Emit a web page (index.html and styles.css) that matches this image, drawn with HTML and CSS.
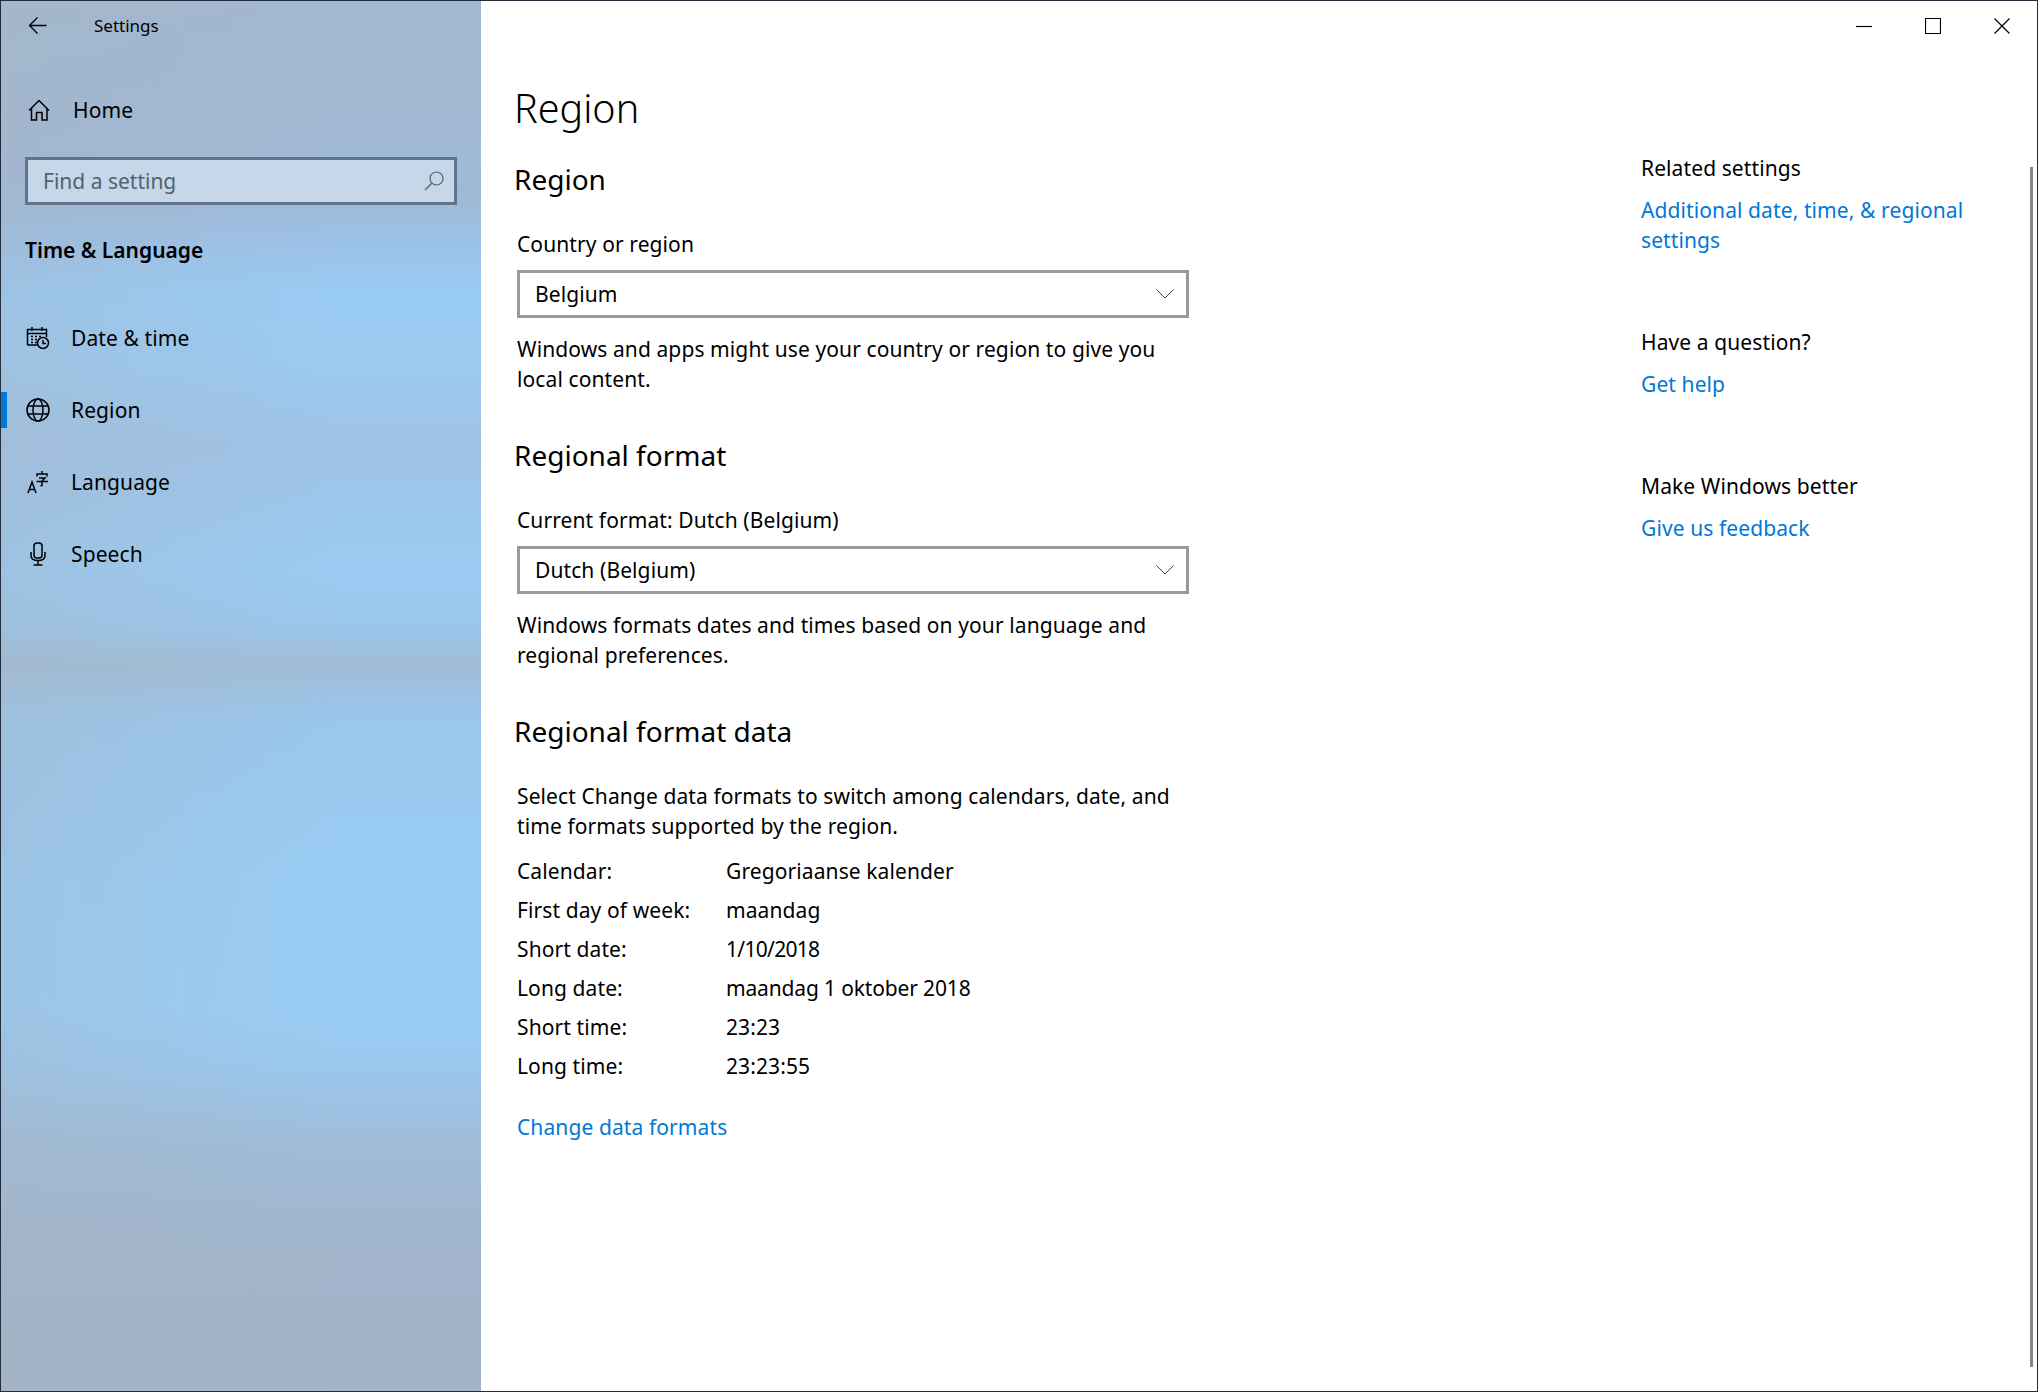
FILE: index.html
```html
<!DOCTYPE html>
<html>
	<head>
		<title>Settings</title>
		<link rel="stylesheet" href="styles.css">
	</head>
	<body>
		<div class="window">
			<div class="sidebar">
				<div class="appbar">
					<svg class="backIcon" width="20" height="20" viewBox="0 0 20 20"><path d="M18.5 9.5H1.5M9.5 1.5L1.5 9.5L9.5 17.5"/></svg>
					<span class="appTitle">Settings</span>
				</div>
				<div class="navItem homeItem">
					<svg class="navIcon" width="24" height="24" viewBox="0 0 24 24"><path d="M2 12.5L12 2.5L22 12.5M4.5 10.5V22H9.5V14.5H15V22H20V10.5"/></svg>
					<span>Home</span>
				</div>
				<div class="search">
					<span>Find a setting</span>
					<svg class="searchIcon" width="20" height="20" viewBox="0 0 20 20"><circle cx="12.5" cy="7.5" r="6.5"/><path d="M8 12L1 19"/></svg>
				</div>
				<div class="sectionTitle">Time &amp; Language</div>
				<div class="navItem">
					<svg class="navIcon" width="24" height="24" viewBox="0 0 24 24"><path d="M1.5 19V3.5H20.5V11M1.5 7.5H20.5M6 1V5M16 1V5M12 19H1.5"/><path class="dots" d="M5 10.5H7M9 10.5H11M13 10.5H15M5 13.5H7M9 13.5H11M5 16.5H7M9 16.5H11"/><circle cx="17" cy="17" r="5.5"/><path d="M17 14V17.5H20"/></svg>
					<span>Date &amp; time</span>
				</div>
				<div class="navItem active">
					<svg class="navIcon" width="24" height="24" viewBox="0 0 24 24"><circle cx="12" cy="12" r="11"/><ellipse cx="12" cy="12" rx="5" ry="11"/><path d="M1.5 8H22.5M1.5 16H22.5"/></svg>
					<span>Region</span>
				</div>
				<div class="navItem">
					<svg class="navIcon" width="24" height="24" viewBox="0 0 24 24"><path d="M2 23L6 12L10 23M3.5 19.5H8.5M11 6.5V4H21V6.5M13 8H19L16 11V15.5L14.5 16M10.5 11.5H22M16 1V4"/></svg>
					<span>Language</span>
				</div>
				<div class="navItem">
					<svg class="navIcon" width="24" height="24" viewBox="0 0 24 24"><rect x="8" y="1" width="8" height="15" rx="3"/><path d="M5 10V13.5C5 17 8 18.5 12 18.5C16 18.5 19 17 19 13.5V10M12 18.5V23M7.5 23H16.5"/></svg>
					<span>Speech</span>
				</div>
			</div>

			<div class="main">
				<div class="captionBar">
					<svg class="captionIcon" width="16" height="16" viewBox="0 0 16 16"><path d="M0 8.5H16"/></svg>
					<svg class="captionIcon" width="16" height="16" viewBox="0 0 16 16"><path d="M.5.5H15.5V15.5H.5Z"/></svg>
					<svg class="captionIcon" width="16" height="16" viewBox="0 0 16 16"><path d="M.5.5L15.5 15.5M15.5.5L.5 15.5"/></svg>
				</div>
				<div class="columns">
					<div class="content">
						<h1>Region</h1>
						<h2 class="firstHeading">Region</h2>
						<div class="label">Country or region</div>
						<div class="select">
							<span>Belgium</span>
							<svg class="chevron" width="18" height="10" viewBox="0 0 18 10"><path d="M.5.5L9 9L17.5.5"/></svg>
						</div>
						<p class="desc">Windows and apps might use your country or region to give you<br>local content.</p>
						<h2>Regional format</h2>
						<div class="label">Current format: Dutch (Belgium)</div>
						<div class="select">
							<span>Dutch (Belgium)</span>
							<svg class="chevron" width="18" height="10" viewBox="0 0 18 10"><path d="M.5.5L9 9L17.5.5"/></svg>
						</div>
						<p class="desc">Windows formats dates and times based on your language and<br>regional preferences.</p>
						<h2>Regional format data</h2>
						<p class="desc dataIntro">Select Change data formats to switch among calendars, date, and<br>time formats supported by the region.</p>
						<div class="dataTable">
							<span>Calendar:</span><span>Gregoriaanse kalender</span>
							<span>First day of week:</span><span>maandag</span>
							<span>Short date:</span><span class="tightDate">1/10/2018</span>
							<span>Long date:</span><span class="longDate">maandag 1 oktober 2018</span>
							<span>Short time:</span><span>23:23</span>
							<span>Long time:</span><span>23:23:55</span>
						</div>
						<a class="link changeLink">Change data formats</a>
					</div>
					<div class="related">
						<div class="relatedBlock">
							<div class="relatedTitle">Related settings</div>
							<a class="link">Additional date, time, &amp; regional<br>settings</a>
						</div>
						<div class="relatedBlock">
							<div class="relatedTitle">Have a question?</div>
							<a class="link">Get help</a>
						</div>
						<div class="relatedBlock">
							<div class="relatedTitle">Make Windows better</div>
							<a class="link">Give us feedback</a>
						</div>
					</div>
				</div>
				<div class="scrollbar"></div>
			</div>
		</div>
	</body>
</html>
```

FILE: styles.css
```css
* {
	box-sizing: border-box;
}
body {
	margin: 0px;
	background-color: white;
	font-family: "Noto Sans", "Open Sans", sans-serif;
	font-size: 21px;
	letter-spacing: 0.1px;
	line-height: 30px;
	color: #000;
}
svg {
	fill: none;
	stroke: #000;
	stroke-width: 1.5;
	flex: none;
	display: block;
}
.window {
	display: flex;
	width: 2038px;
	height: 1392px;
	border: 1px solid #1f2d3d;
	overflow: hidden;
}

/* left column */
.sidebar {
	width: 480px;
	flex: none;
	background:
		linear-gradient(90deg, rgba(165, 180, 195, 0.35), rgba(165, 180, 195, 0) 70%),
		linear-gradient(180deg, #a2b7d0 0%, #9fb9d5 14%, #9cc0e6 17%, #99cbf4 21%, #9ccaf1 26%, #9fc2e6 32%, #9cc8ee 38%, #9bcaf2 41%, #9bc6ec 45%, #a0bcd6 47.8%, #9ac6ec 51.6%, #99ccf4 63%, #9acdf5 72.6%, #9ac8ef 76.4%, #9fbcd9 82%, #a1b4cb 90%, #a2b3c7 100%);
}
.appbar {
	display: flex;
	align-items: center;
	height: 50px;
	margin-bottom: 24px;
	padding-left: 27px;
}
.backIcon {
	stroke-width: 1.3;
}
.appTitle {
	font-size: 17px;
	letter-spacing: 0;
	margin-left: 46px;
}
.navItem {
	display: flex;
	align-items: center;
	height: 72px;
	padding-left: 25px;
	position: relative;
	letter-spacing: 0.1px;
}
.navItem span {
	margin-left: 21px;
}
.homeItem {
	height: 70px;
	padding-left: 26px;
}
.homeItem span {
	margin-left: 22px;
}
.active::before {
	content: "";
	position: absolute;
	left: 0px;
	top: 18px;
	width: 6px;
	height: 36px;
	background: #0078d7;
}
.search {
	display: flex;
	align-items: center;
	justify-content: space-between;
	width: 432px;
	height: 48px;
	margin: 12px 0 0 24px;
	padding: 0 10px 0 15px;
	border: 3px solid #5f7389;
	background: #c5d7e8;
	color: #54616f;
	letter-spacing: 0;
}
.searchIcon {
	stroke: #54616f;
	stroke-width: 1.2;
}
.sectionTitle {
	margin: 27px 0 34px 24px;
	font-weight: 600;
	letter-spacing: 0;
	line-height: 36px;
}

/* right part */
.main {
	flex: 1;
	position: relative;
	min-width: 0;
}
.captionBar {
	display: flex;
	justify-content: flex-end;
	align-items: center;
	gap: 53px;
	height: 50px;
	padding-right: 27px;
}
.captionIcon {
	stroke-width: 1.2;
}
.columns {
	display: flex;
}
.content {
	width: 1160px;
	padding-left: 36px;
}
h1 {
	margin: 29px 0 0 -3px;
	font-size: 39.5px;
	font-weight: 300;
	letter-spacing: 0;
	line-height: 56px;
}
h2 {
	margin: 41px 0 0 -3px;
	font-size: 28px;
	font-weight: 400;
	letter-spacing: 0;
	line-height: 40px;
}
.firstHeading {
	margin-top: 23px;
}
.label {
	margin-top: 30px;
}
.select {
	display: flex;
	align-items: center;
	justify-content: space-between;
	width: 672px;
	height: 48px;
	margin-top: 11px;
	padding: 0 12px 0 15px;
	border: 3px solid #999;
}
.chevron {
	stroke: #444;
	stroke-width: 1;
}
.desc {
	margin: 16px 0 0;
}
.dataIntro {
	margin-top: 30px;
}
.dataTable {
	display: grid;
	grid-template-columns: 209px 1fr;
	grid-auto-rows: 39px;
	align-items: center;
	margin-top: 10px;
}
.tightDate {
	letter-spacing: -0.7px;
}
.longDate {
	letter-spacing: -0.15px;
}
.link {
	display: block;
	color: #0078d7;
}
.changeLink {
	margin-top: 27px;
}
.related {
	padding-top: 102px;
}
.relatedBlock {
	margin-bottom: 72px;
}
.relatedTitle {
	margin-bottom: 12px;
}
.scrollbar {
	position: absolute;
	right: 4px;
	top: 166px;
	width: 3px;
	height: 1200px;
	background: #868686;
}
```
